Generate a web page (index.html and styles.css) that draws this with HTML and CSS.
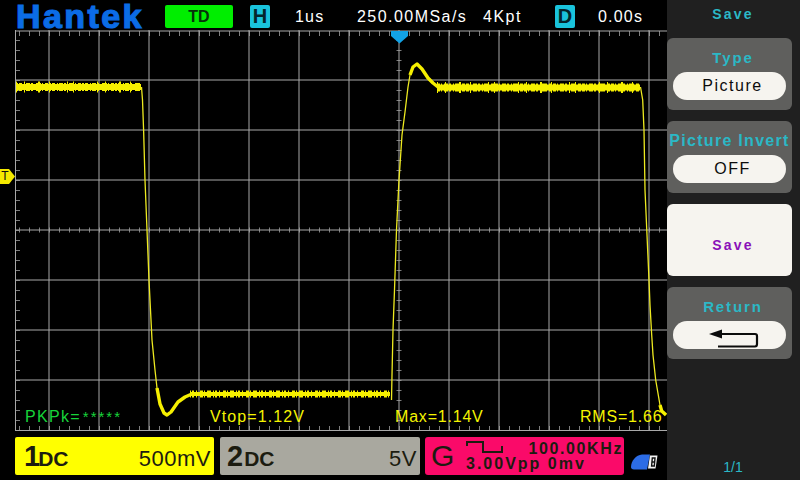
FILE: index.html
```html
<!DOCTYPE html>
<html lang="en">
<head>
<meta charset="utf-8">
<title>Hantek scope</title>
<link rel="stylesheet" href="styles.css">
</head>
<body>
<div class="screen">
  <main class="main">
    <header class="topbar">
      <div class="logo">Hantek</div>
      <div class="td">TD</div>
      <div class="tag tag-h">H</div>
      <div class="info info-time">1us</div>
      <div class="info info-rate">250.00MSa/s</div>
      <div class="info info-depth">4Kpt</div>
      <div class="tag tag-d">D</div>
      <div class="info info-delay">0.00s</div>
    </header>
    <section class="scope">
      <svg class="plot" viewBox="15 30 652 402" width="652" height="402">
        <g class="grid">
          <path d="M49 30V431M99 30V431M149 30V431M199 30V431M249 30V431M299 30V431M349 30V431M399 30V431M449 30V431M499 30V431M549 30V431M599 30V431M649 30V431"/>
          <path d="M15 80H667M15 130H667M15 180H667M15 230H667M15 280H667M15 330H667M15 380H667"/>
          <path d="M15 31H667M15 430.500H667M15.500 30V431"/>
        </g>
        <g class="ticks">
          <path class="tick-h" d="M19 33.500H667M19 428.500H667M19 230H667"/>
          <path class="tick-v" d="M17.500 40V430M399 40V430"/>
        </g>
        <path class="noise-core" d="M16 87H141"/>
        <path class="noise-a" d="M16 87H141"/>
        <path class="noise-spike" d="M16 87H141"/>
        <path class="noise-core" d="M437 87.500H640"/>
        <path class="noise-b" d="M437 87.500H640"/>
        <path class="noise-spike" d="M437 87.500H640"/>
        <path class="noise-low-core" d="M190 394H390"/>
        <path class="noise-low" d="M190 394H390"/>
        <path class="trace-thin" d="M141.500 87L142.500 100L143.600 130L145 180L147 230L149 280L150.500 310L152 340L155 370L157 388"/>
        <path class="trace-mid" d="M157 388L160 404L164 413L167 415L171 412L178 402L185 397L193 393.500"/>
        <path class="trace-thin" d="M391.500 400L392 375L393 330L394.500 290L396.500 230L399 180L402 135L405 112L408 87L410 75"/>
        <path class="trace-mid" d="M410 75L413 67L417 64L422 69L428 78L433 83L438 87"/>
        <path class="trace-thin" d="M640.500 87L642.700 100L644 130L645 190L647 235L649 280L650 305L651.700 335L653 355L655.700 380L660 405"/>
        <path class="trace-mid" d="M660 405L661.700 411L666 415"/>
        <path class="trigger" d="M391 31H408V36L399.500 43.500L391 36Z"/>
      </svg>
      <div class="tmark">T</div>
      <div class="measures">
        <span class="measure measure-green">PKPk=<span class="stars">*****</span></span>
        <span class="measure">Vtop=1.12V</span>
        <span class="measure measure-tight">Max=1.14V</span>
        <span class="measure measure-tight">RMS=1.66</span>
      </div>
    </section>
    <footer class="bottombar">
      <div class="chan chan-1">
        <span class="chan-num">1</span><span class="chan-cpl">DC</span>
        <span class="chan-scale">500mV</span>
      </div>
      <div class="chan chan-2">
        <span class="chan-num">2</span><span class="chan-cpl">DC</span>
        <span class="chan-scale">5V</span>
      </div>
      <div class="gen">
        <span class="gen-g">G</span>
        <div class="gen-body">
          <div class="gen-row">
            <svg class="gen-wave" width="37" height="12" viewBox="0 0 37 12"><path d="M1 5V1H17V11H36V5"/></svg>
            <span class="gen-freq">100.00KHz</span>
          </div>
          <div class="gen-amp">3.00Vpp 0mv</div>
        </div>
      </div>
      <svg class="usb" width="28" height="18" viewBox="0 0 28 18">
        <path class="usb-body" d="M1 14C1 8 6 2 12 1.500H20L17 16.500H4C2 16.500 1 15.500 1 14Z"/>
        <path class="usb-card" d="M20 2.500H27.500L25.500 15.500H18Z"/>
        <path class="usb-mark" d="M22.300 5H25L24.300 13H21.600ZM22 9H24.700"/>
      </svg>
    </footer>
  </main>
  <aside class="side">
    <div class="side-title">Save</div>
    <div class="key">
      <div class="key-label">Type</div>
      <div class="pill">Picture</div>
    </div>
    <div class="key">
      <div class="key-label key-label-long">Picture Invert</div>
      <div class="pill">OFF</div>
    </div>
    <div class="key key-active">
      <div class="key-action">Save</div>
    </div>
    <div class="key">
      <div class="key-label">Return</div>
      <div class="pill">
        <svg class="return-icon" width="50" height="20" viewBox="0 0 50 20">
          <path class="return-head" d="M0 6L13 1.500V10.500Z"/>
          <path class="return-line" d="M12 6H46Q48 6 48 8V16Q48 18.500 46 18.500H9"/>
        </svg>
      </div>
    </div>
    <div class="page">1/1</div>
  </aside>
</div>
</body>
</html>
```
FILE: styles.css
```css
* { box-sizing: border-box; }
html, body { margin: 0; padding: 0; background: #000; }
body { font-family: "Liberation Sans", Arial, sans-serif; }

.screen { display: flex; width: 800px; height: 480px; overflow: hidden; background: #000; }
.main { display: flex; flex-direction: column; width: 667px; height: 480px; }

/* top bar */
.topbar { display: flex; align-items: center; height: 30px; flex: none; color: #fff; }
.logo {
  width: 149px; margin-left: 16px; height: 30px; padding-top: 2px; line-height: 28px;
  font-size: 34px; font-weight: 700; letter-spacing: 2.4px; color: #0b6ce6;
  -webkit-text-stroke: 1.2px #0b6ce6;
}
.td {
  width: 68px; height: 23px; margin-top: 3px; border-radius: 2px; background: #00ee00; color: #06320a;
  font-size: 16px; font-weight: 700; line-height: 23px; text-align: center;
}
.tag {
  width: 20px; height: 23px; margin-top: 3px; border-radius: 2px; background: #19c3dc; color: #04252c;
  font-size: 20px; font-weight: 700; line-height: 23px; text-align: center;
}
.tag-h { margin-left: 17px; }
.info { margin-top: 3px; font-size: 16px; line-height: 23px; letter-spacing: 1.2px; white-space: nowrap; }
.info-time { margin-left: 25px; width: 62px; }
.info-rate { width: 126px; letter-spacing: 1.45px; }
.info-depth { width: 72px; letter-spacing: 1.5px; }
.info-delay { margin-left: 23px; }

/* scope */
.scope { position: relative; flex: none; width: 652px; height: 402px; margin-left: 15px; background: #000; }
.plot { display: block; }
.grid path { fill: none; stroke: #a8a8a8; stroke-width: 1; }
.tick-h { fill: none; stroke: #a8a8a8; stroke-width: 5; stroke-dasharray: 1 9; }
.tick-v { fill: none; stroke: #a8a8a8; stroke-width: 5; stroke-dasharray: 1 9; }
.ticks { opacity: .75; }

.noise-core { fill: none; stroke: #f6f000; stroke-width: 6; }
.noise-a { fill: none; stroke: #f6f000; stroke-width: 8; stroke-dasharray: 2 1 3 2 1 1 4 1 2 3 5 1 1 2 3 1; }
.noise-b { fill: none; stroke: #f6f000; stroke-width: 8; stroke-dasharray: 3 1 1 2 4 1 2 2 1 1 5 2 3 1; }
.noise-spike { fill: none; stroke: #f6f000; stroke-width: 11; stroke-dasharray: 1 7 1 13 2 9 1 17 1 5 1 23; }
.noise-low-core { fill: none; stroke: #f6f000; stroke-width: 4; }
.noise-low { fill: none; stroke: #f6f000; stroke-width: 7; stroke-dasharray: 1 1 2 2 1 3 3 1 1 2 4 2; }
.trace-thin { fill: none; stroke: #eeea20; stroke-width: 1.3; }
.trace-mid { fill: none; stroke: #f6f000; stroke-width: 3.4; stroke-linejoin: round; }
.trigger { fill: #12a2e6; }

.tmark {
  position: absolute; left: -15px; top: 139px; width: 15px; height: 15px; padding-right: 5px;
  background: #f6ea00; color: #111; font-size: 12px; line-height: 15px; text-align: center;
  clip-path: polygon(0 0, 9px 0, 15px 7.5px, 9px 15px, 0 15px);
}
.measures {
  position: absolute; left: 10px; bottom: 6px; display: grid; grid-template-columns: 185px 185px 185px 88px;
  font-size: 16px; line-height: 18px; letter-spacing: 1.1px; color: #f4f400; white-space: nowrap;
}
.measure-green { color: #17d43a; letter-spacing: 1.3px; }
.measure-tight { letter-spacing: .8px; }
.stars { margin-left: 2px; font-size: 15px; letter-spacing: 2px; }

/* bottom bar */
.bottombar { display: flex; align-items: flex-start; flex: none; height: 48px; padding: 5px 0 0 15px; color: #1c1c10; }
.chan {
  display: flex; align-items: baseline; width: 199px; height: 38px; margin-right: 6px; padding: 0 3px 0 9px;
  border-radius: 2px; line-height: 38px;
}
.chan-1 { background: #ffff00; }
.chan-2 { width: 200px; margin-right: 5px; padding-left: 7px; background: #a9a89f; }
.chan-num { font-size: 29px; font-weight: 700; }
.chan-cpl { margin-left: 1px; font-size: 21px; font-weight: 700; }
.chan-1 .chan-cpl { margin-left: -2px; }
.chan-scale { margin-left: auto; font-size: 22px; letter-spacing: .5px; }

.gen { display: flex; width: 199px; height: 38px; border-radius: 3px; background: #fa0a69; }
.gen-g { width: 41px; padding-left: 6px; font-size: 30px; line-height: 38px; }
.gen-body { display: flex; flex-direction: column; flex: 1; padding-top: 4px; }
.gen-row { display: flex; justify-content: space-between; height: 14px; padding-right: 1px; }
.gen-wave { fill: none; stroke: #1c1c10; stroke-width: 2; }
.gen-freq { font-size: 16px; font-weight: 700; line-height: 15px; letter-spacing: 1.6px; }
.gen-amp { margin-top: 1px; font-size: 16px; font-weight: 700; line-height: 16px; letter-spacing: 2px; white-space: nowrap; }

.usb { margin: 16px 0 0 6px; flex: none; }
.usb-body { fill: #2c6ce6; }
.usb-card { fill: #f4f4f4; }
.usb-mark { fill: none; stroke: #111; stroke-width: 1.4; }

/* side panel */
.side { display: flex; flex-direction: column; width: 133px; height: 480px; padding-right: 8px; background: #202020; }
.side-title {
  flex: none; height: 38px; padding: 6px 0 0 7px; font-size: 14px; font-weight: 700; line-height: 17px; letter-spacing: 2.2px;
  text-align: center; color: #2bb8c6;
}
.key {
  display: flex; flex-direction: column; align-items: center; flex: none; height: 72px; margin-bottom: 11px;
  padding: 11px 6px 0; border-radius: 6px; background: #5f5f5d;
}
.key-label {
  height: 23px; padding-left: 7px; font-size: 15px; font-weight: 700; line-height: 18px; letter-spacing: 1.9px; color: #2bb8c6; white-space: nowrap;
}
.key-label-long { padding-left: 0; font-size: 16px; letter-spacing: 1.3px; }
.pill {
  display: flex; align-items: center; justify-content: center; flex: none; width: 113px; height: 28px; padding-left: 6px; border-radius: 14px;
  background: #f6f4ef; color: #0c0c0c; font-size: 16px; letter-spacing: 1.5px;
}
.key-active { justify-content: center; padding: 10px 0 0 7px; background: #f6f4ef; }
.key-action { font-size: 14px; font-weight: 700; letter-spacing: 2.2px; color: #8a10b8; }
.return-icon { display: block; margin: 5px 0 0 2px; }
.return-head { fill: #0c0c0c; }
.return-line { fill: none; stroke: #0c0c0c; stroke-width: 2.2; }
.page { margin-top: 88px; padding-left: 7px; font-size: 14px; line-height: 18px; text-align: center; color: #2bb8c6; }
```
